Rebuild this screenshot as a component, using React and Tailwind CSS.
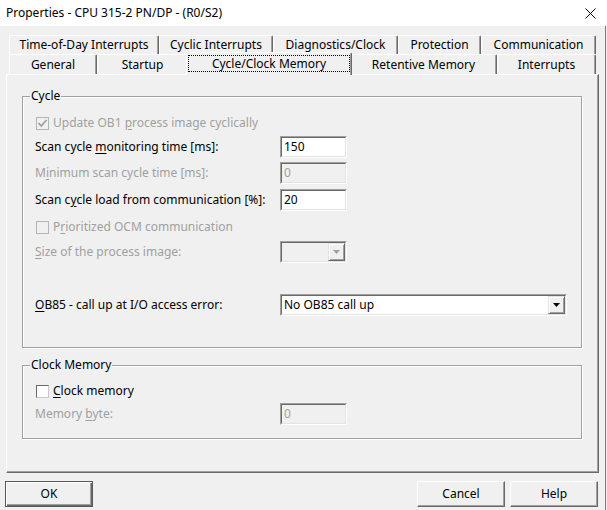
import React from 'react';

const DIS = 'text-[#a0a0a0]';

function U({ children }) {
  return <span className="underline underline-offset-[2px]">{children}</span>;
}

function Field({ value, disabled, w = 'w-[67px]' }) {
  return (
    <div className={`h-[22px] ${w} border border-t-[#a0a0a0] border-l-[#a0a0a0] border-b-white border-r-white`}>
      <div
        className={`h-full border border-t-[#696969] border-l-[#696969] border-b-[#e3e3e3] border-r-[#e3e3e3] px-[2px] leading-[18px] ${
          disabled ? 'bg-[#f0f0f0] text-[#a0a0a0]' : 'bg-white text-black'
        }`}
      >
        {value}
      </div>
    </div>
  );
}

function Arrow({ disabled }) {
  return (
    <div className="h-full w-[17px] flex items-center justify-center bg-[#f0f0f0] border border-t-[#e3e3e3] border-l-[#e3e3e3] border-b-[#696969] border-r-[#696969] shadow-[inset_1px_1px_0_#fff,inset_-1px_-1px_0_#a0a0a0]">
      <svg width="7" height="4" viewBox="0 0 7 4">
        <path d="M0 0 H7 L3.5 4 Z" fill={disabled ? '#a0a0a0' : '#000'} />
      </svg>
    </div>
  );
}

function Combo({ value, disabled, w }) {
  return (
    <div className={`h-[22px] ${w} border border-t-[#a0a0a0] border-l-[#a0a0a0] border-b-white border-r-white`}>
      <div
        className={`h-full flex border border-t-[#696969] border-l-[#696969] border-b-[#e3e3e3] border-r-[#e3e3e3] ${
          disabled ? 'bg-[#f0f0f0]' : 'bg-white'
        }`}
      >
        <div className="flex-1 px-[2px] leading-[18px]">{value}</div>
        <div className="h-[18px]">
          <Arrow disabled={disabled} />
        </div>
      </div>
    </div>
  );
}

function Check({ checked, disabled }) {
  return (
    <div
      className={`w-[13px] h-[13px] shrink-0 flex items-center justify-center border ${
        disabled
          ? 'border-[#b5b5b5] bg-[#f0f0f0]'
          : 'border-t-[#696969] border-l-[#696969] border-b-[#c8c8c8] border-r-[#c8c8c8] bg-white'
      }`}
    >
      {checked && (
        <svg width="11" height="11" viewBox="0 0 11 11">
          <polyline points="1.5,5 4.2,8 9.5,2" fill="none" stroke="#a0a0a0" strokeWidth="1.8" />
        </svg>
      )}
    </div>
  );
}

function Tab({ label, w }) {
  return (
    <div
      className={`${w} h-full flex items-center justify-center border-t border-l border-white border-r border-r-[#696969] rounded-t-[2px] shadow-[inset_-1px_0_0_#a0a0a0] bg-[#f0f0f0]`}
    >
      {label}
    </div>
  );
}

function Group({ title, className, children }) {
  return (
    <div className={`relative border border-[#a0a0a0] shadow-[inset_1px_1px_0_#fff,1px_1px_0_#fff] ${className}`}>
      <span className="absolute left-[7px] -top-[9px] px-[1px] bg-[#f0f0f0] leading-[16px]">{title}</span>
      {children}
    </div>
  );
}

function Button({ label, isDefault }) {
  return (
    <div
      className={`w-[88px] h-[26px] flex items-center justify-center bg-[#f0f0f0] ${
        isDefault
          ? 'border border-[#5a5a5a] shadow-[inset_1px_1px_0_#fff,inset_-1px_-1px_0_#696969,inset_-2px_-2px_0_#a0a0a0]'
          : 'border border-t-white border-l-white border-b-[#696969] border-r-[#696969] shadow-[inset_-1px_-1px_0_#a0a0a0]'
      }`}
    >
      {label}
    </div>
  );
}

export default function App() {
  return (
    <div className="w-[607px] h-[510px] flex flex-col bg-[#f0f0f0] text-black text-[12px] font-['Noto_Sans',sans-serif] overflow-hidden">
      <div className="h-[26px] bg-white flex items-center justify-between pl-[6px] pr-[11px]">
        <span className="leading-[16px]">Properties - CPU 315-2 PN/DP - (R0/S2)</span>
        <svg width="11" height="11" viewBox="0 0 11 11">
          <path d="M0.5 0.5 L10.5 10.5 M10.5 0.5 L0.5 10.5" stroke="#000" strokeWidth="1" />
        </svg>
      </div>

      <div className="flex-1 w-[606px] border-r border-[#7a7a7a] pt-[9px]">
        <div className="flex ml-[9px] h-[19px]">
          <Tab label="Time-of-Day Interrupts" w="w-[150px]" />
          <Tab label="Cyclic Interrupts" w="w-[114px]" />
          <Tab label="Diagnostics/Clock" w="w-[125px]" />
          <Tab label="Protection" w="w-[83px]" />
          <Tab label="Communication" w="w-[115px]" />
        </div>
        <div className="flex ml-[9px] h-[20px]">
          <Tab label="General" w="w-[88px]" />
          <Tab label="Startup" w="w-[91px]" />
          <div className="relative z-10 -mx-[2px] -mt-[2px] w-[166px] h-[23px] pt-[2px] px-[1px] pb-[3px] bg-[#f0f0f0] border-t border-l border-white border-r border-r-[#696969] rounded-t-[2px] shadow-[inset_-1px_0_0_#a0a0a0]">
            <div className="h-full flex items-center justify-center border border-dotted border-black">
              Cycle/Clock Memory
            </div>
          </div>
          <Tab label="Retentive Memory" w="w-[147px]" />
          <Tab label="Interrupts" w="w-[99px]" />
        </div>

        <div className="ml-[6px] w-[593px] h-[399px] pt-[21px] pl-[15px] border-t border-l border-white border-r border-b border-r-[#696969] border-b-[#696969] shadow-[inset_-1px_-1px_0_#a0a0a0]">
          <Group title="Cycle" className="w-[560px] h-[252px] pl-[12px] pt-[18px]">
            <div className="h-[16px] flex items-center">
              <div className="ml-[1px]">
                <Check checked disabled />
              </div>
              <span className={`ml-[4px] ${DIS}`}>
                Update OB1 <U>p</U>rocess image cyclically
              </span>
            </div>
            <div className="mt-[5px] flex items-center">
              <span className="w-[245px]">
                Scan cycle <U>m</U>onitoring time [ms]:
              </span>
              <Field value="150" />
            </div>
            <div className="mt-[4px] flex items-center">
              <span className={`w-[245px] ${DIS}`}>
                M<U>i</U>nimum scan cycle time [ms]:
              </span>
              <Field value="0" disabled />
            </div>
            <div className="mt-[5px] flex items-center">
              <span className="w-[245px]">
                Scan c<U>y</U>cle load from communication [%]:
              </span>
              <Field value="20" />
            </div>
            <div className="mt-[8px] h-[16px] flex items-center">
              <div className="ml-[1px]">
                <Check disabled />
              </div>
              <span className={`ml-[4px] ${DIS}`}>
                P<U>r</U>ioritized OCM communication
              </span>
            </div>
            <div className="mt-[6px] flex items-center">
              <span className={`w-[245px] ${DIS}`}>
                <U>S</U>ize of the process image:
              </span>
              <Combo value="" disabled w="w-[67px]" />
            </div>
            <div className="mt-[31px] flex items-center">
              <span className="w-[245px]">
                <U>O</U>B85 - call up at I/O access error:
              </span>
              <Combo value="No OB85 call up" w="w-[287px]" />
            </div>
          </Group>

          <Group title="Clock Memory" className="mt-[17px] w-[560px] h-[74px] pl-[12px] pt-[17px]">
            <div className="h-[16px] flex items-center">
              <div className="ml-[1px]">
                <Check />
              </div>
              <span className="ml-[4px]">
                <U>C</U>lock memory
              </span>
            </div>
            <div className="mt-[4px] flex items-center">
              <span className={`w-[245px] ${DIS}`}>
                Memory <U>b</U>yte:
              </span>
              <Field value="0" disabled />
            </div>
          </Group>
        </div>

        <div className="mt-[8px] flex pl-[5px]">
          <Button label="OK" isDefault />
          <div className="ml-[324px]">
            <Button label="Cancel" />
          </div>
          <div className="ml-[5px]">
            <Button label="Help" />
          </div>
        </div>
      </div>
    </div>
  );
}
